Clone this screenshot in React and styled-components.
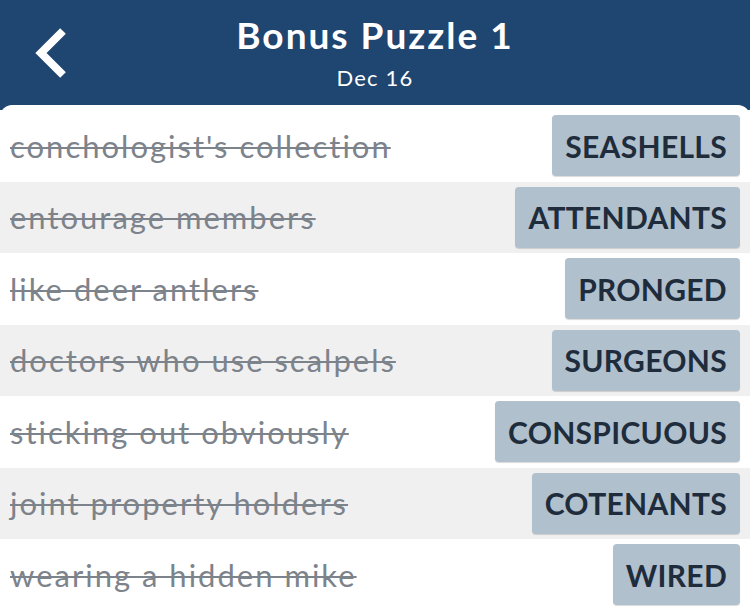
import React from "react";
import styled, { createGlobalStyle } from "styled-components";

const clues = [
    { clue: "conchologist's collection", answer: "SEASHELLS" },
    { clue: "entourage members", answer: "ATTENDANTS" },
    { clue: "like deer antlers", answer: "PRONGED" },
    { clue: "doctors who use scalpels", answer: "SURGEONS" },
    { clue: "sticking out obviously", answer: "CONSPICUOUS" },
    { clue: "joint property holders", answer: "COTENANTS" },
    { clue: "wearing a hidden mike", answer: "WIRED" },
];

const App = () => {
    return (
        <Page>
            <GlobalStyle />
            <Header>
                <Back aria-label="Back">
                    <svg width="34" height="52" viewBox="0 0 34 52">
                        <path
                            d="M29 4 L7 26 L29 48"
                            fill="none"
                            stroke="#fff"
                            strokeWidth="8"
                            strokeLinejoin="miter"
                        />
                    </svg>
                </Back>
                <Title>Bonus Puzzle 1</Title>
                <Subtitle>Dec 16</Subtitle>
            </Header>
            <Card>
                {clues.map((c, i) => (
                    <Row key={c.answer} $alt={i % 2 === 1}>
                        <Clue>{c.clue}</Clue>
                        <Answer>{c.answer}</Answer>
                    </Row>
                ))}
            </Card>
        </Page>
    );
};

const GlobalStyle = createGlobalStyle`
    body {
        margin: 0;
        background: #1f4571;
        font-family: "Lato", "Noto Sans", sans-serif;
    }
`;

const Page = styled.div`
    width: 750px;
    height: 608px;
    overflow: hidden;
    background: #1f4571;
`;

const Header = styled.div`
    position: relative;
    height: 105px;
    display: flex;
    flex-direction: column;
    align-items: center;
    color: #fff;
`;

const Back = styled.div`
    position: absolute;
    left: 34px;
    top: 27px;
    display: flex;
`;

const Title = styled.div`
    margin-top: 12px;
    font-size: 37px;
    font-weight: 700;
    line-height: 46px;
    letter-spacing: 2px;
`;

const Subtitle = styled.div`
    margin-top: 7px;
    font-size: 22px;
    line-height: 26px;
    letter-spacing: 1.2px;
`;

const Card = styled.div`
    background: #fff;
    border-radius: 12px 12px 0 0;
    padding-top: 5px;
    height: 503px;
`;

const Row = styled.div`
    height: 71.5px;
    box-sizing: border-box;
    padding: 0 10px;
    display: flex;
    align-items: center;
    justify-content: space-between;
    background: ${(p) => (p.$alt ? "#f0f0f0" : "#fff")};
`;

const Clue = styled.span`
    font-size: 31px;
    color: #7d838b;
    letter-spacing: 2px;
    text-decoration: line-through;
    text-decoration-thickness: 2px;
    white-space: nowrap;
`;

const Answer = styled.span`
    height: 61px;
    box-sizing: border-box;
    display: flex;
    align-items: center;
    padding: 0 13px;
    background: #b1c0cd;
    border-radius: 4px;
    box-shadow: 0 1px 1px rgba(0, 0, 0, 0.15);
    color: #1e2c3c;
    font-size: 30px;
    font-weight: 700;
    letter-spacing: 0.3px;
`;

export default App;
